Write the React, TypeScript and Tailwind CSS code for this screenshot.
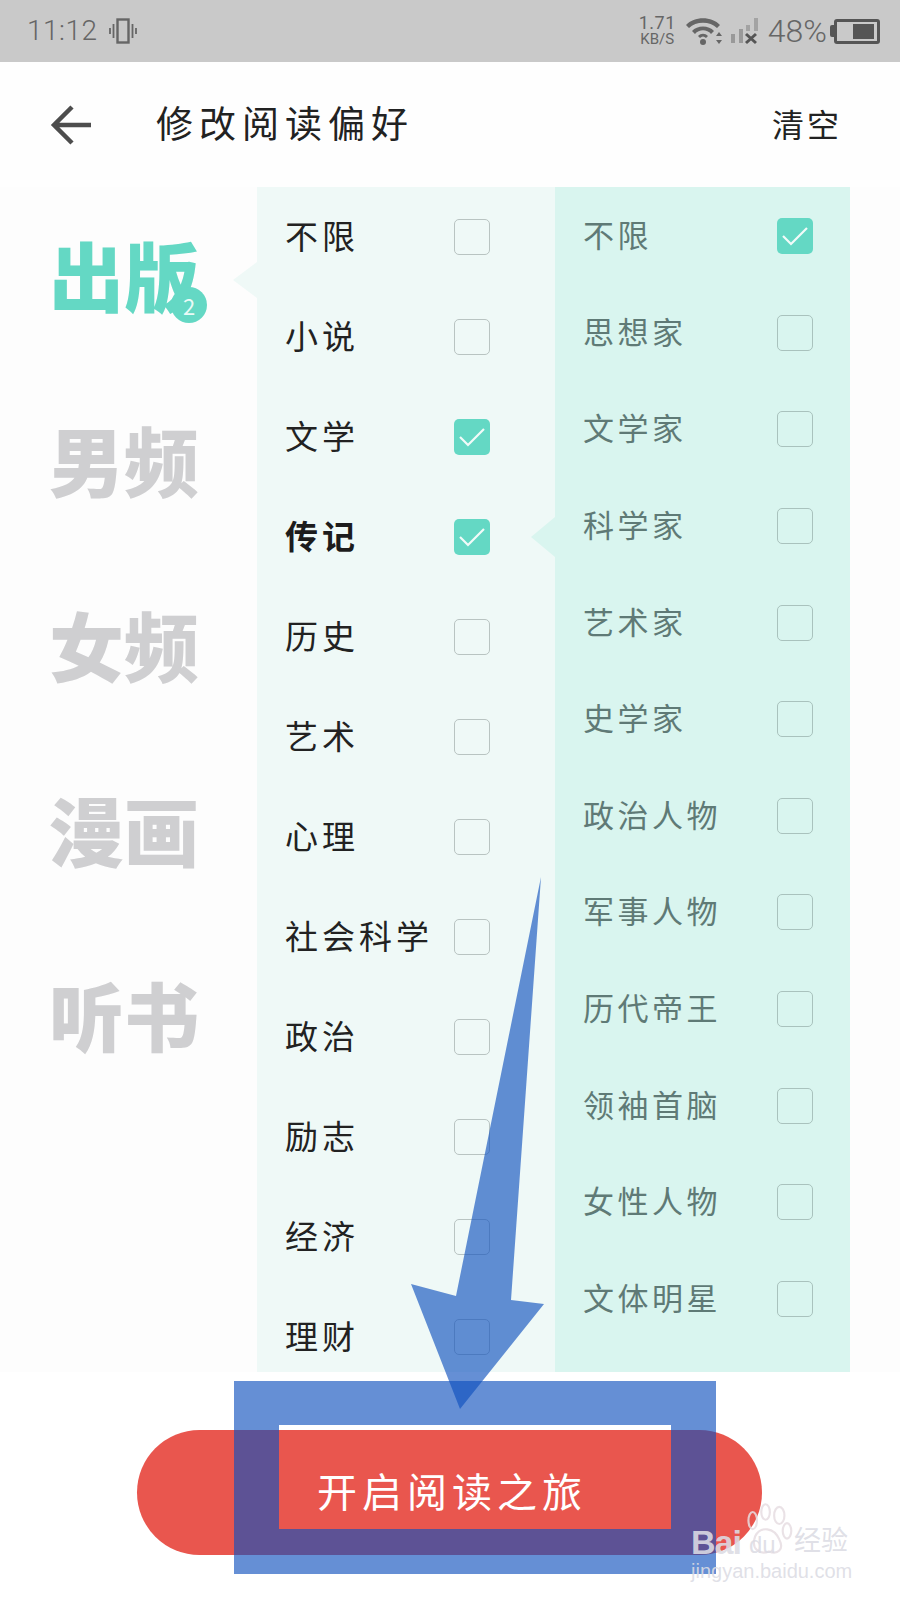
const cjk = "font-['Noto_Sans_CJK_SC','Noto_Sans_CJK_JP',sans-serif]";

type LeftItem = { name: string; checked?: boolean; bold?: boolean };

const categories = ["出版", "男频", "女频", "漫画", "听书"];

const leftItems: LeftItem[] = [
  { name: "不限" },
  { name: "小说" },
  { name: "文学", checked: true },
  { name: "传记", checked: true, bold: true },
  { name: "历史" },
  { name: "艺术" },
  { name: "心理" },
  { name: "社会科学" },
  { name: "政治" },
  { name: "励志" },
  { name: "经济" },
  { name: "理财" },
];

const rightItems = [
  "不限",
  "思想家",
  "文学家",
  "科学家",
  "艺术家",
  "史学家",
  "政治人物",
  "军事人物",
  "历代帝王",
  "领袖首脑",
  "女性人物",
  "文体明星",
];

const Checkbox = ({ checked, tone }: { checked?: boolean; tone: "light" | "dark" }) => {
  if (checked) {
    return (
      <div className="w-[36px] h-[36px] rounded-[5px] bg-[#64d8c4] flex items-center justify-center shrink-0">
        <svg width="28" height="22" viewBox="0 0 28 22" fill="none">
          <path d="M2 11 L10 19 L26 3" stroke="#f2fbf9" strokeWidth="2.2" />
        </svg>
      </div>
    );
  }
  return (
    <div
      className={
        tone === "light"
          ? "w-[36px] h-[36px] rounded-[5px] border border-[#b9c4c2] shrink-0"
          : "w-[36px] h-[36px] rounded-[5px] border border-[#a9c2bd] shrink-0"
      }
    />
  );
};

const StatusBar = () => (
  <div className="h-[62px] bg-[#c9c9c9] flex items-center justify-between pl-[27px] pr-[20px] text-[#666666] shrink-0">
    <div className="flex items-center gap-[11px]">
      <span className="font-['Roboto',sans-serif] font-light text-[28px] leading-none tracking-[0.5px]">11:12</span>
      <svg width="28" height="26" viewBox="0 0 28 26" fill="none" stroke="#666666">
        <rect x="8.5" y="1.5" width="11" height="23" strokeWidth="2.4" />
        <path d="M4.5 6v14M1 10v6M23.5 6v14M27 10v6" strokeWidth="1.8" />
      </svg>
    </div>
    <div className="flex items-center">
      <div className="flex flex-col items-center font-['Roboto',sans-serif] text-[#666666] mr-[10px] mt-[-2px]">
        <span className="text-[18px] leading-[18px] tracking-[0.5px]">1.71</span>
        <span className="text-[15px] leading-[15px]">KB/S</span>
      </div>
      <svg width="36" height="28" viewBox="0 0 36 28" fill="#666666" className="mr-[9px]">
        <path d="M0 8 C8 -1 26 -1 34 8 L31 11 C24 4 10 4 3 11 Z" />
        <path d="M6 14 C11 8 23 8 28 14 L25 17 C21 12 13 12 9 17 Z" />
        <path d="M12 19 C15 16 19 16 22 19 L20 21 C18 19 16 19 14 21 Z" />
        <circle cx="17" cy="25" r="3" />
        <path d="M33 15 L36 19 H30 Z M33 27 L36 23 H30 Z" />
      </svg>
      <svg width="28" height="28" viewBox="0 0 28 28" className="mr-[9px]">
        <rect x="0" y="17" width="4" height="9" fill="#999999" />
        <rect x="8" y="12" width="4" height="14" fill="#999999" />
        <rect x="15" y="8" width="4" height="6" fill="#a3a3a3" />
        <rect x="23" y="1" width="4" height="13" fill="#a3a3a3" />
        <path d="M15 17 L25 26 M25 17 L15 26" stroke="#555555" strokeWidth="3" />
      </svg>
      <span className="font-['Roboto',sans-serif] font-light text-[32px] leading-none mr-[3px]">48%</span>
      <div className="w-[4px] h-[12px] bg-[#555555] rounded-l-[2px]" />
      <div className="w-[46px] h-[25px] border-[3px] border-[#555555] rounded-[3px] flex justify-end p-[2px] pr-[3px]">
        <div className="w-[21px] h-full bg-[#555555]" />
      </div>
    </div>
  </div>
);

const Header = () => (
  <div className={`h-[125px] bg-[#fefefe] flex items-center justify-between pl-[50px] pr-[58px] shrink-0 ${cjk}`}>
    <div className="flex items-center">
      <svg width="42" height="40" viewBox="0 0 42 40" fill="none" stroke="#4d4d4d" strokeWidth="4.5">
        <path d="M41 20 H4 M22 2 L4 20 L22 38" />
      </svg>
      <span className="ml-[64px] mb-[4px] text-[37px] leading-none tracking-[6px] text-[#222222]">修改阅读偏好</span>
    </div>
    <span className="mb-[4px] text-[32px] leading-none tracking-[3px] text-[#222222]">清空</span>
  </div>
);

const Sidebar = () => (
  <div className="w-[257px] shrink-0 relative flex flex-col pl-[49px]">
    {categories.map((name, i) => (
      <div key={name} className="h-[185px] flex items-center pb-[12px]">
        <span
          className={
            i === 0
              ? "text-[75px] leading-none font-black text-[#64d8c4]"
              : "text-[75px] leading-none font-black text-[#cfcfd1]"
          }
        >
          {name}
        </span>
      </div>
    ))}
    <div className="absolute left-[171px] top-[100px] w-[36px] h-[36px] rounded-full bg-[#64d8c4] flex items-center justify-center text-[#eafaf6] text-[22px] leading-none">
      2
    </div>
    <div className="absolute right-0 top-[75px] border-y-[18px] border-y-transparent border-r-[24px] border-r-[#eff9f7]" />
  </div>
);

const Baidu = () => (
  <div className="absolute left-[691px] top-[1503px] w-[170px] h-[84px] text-[#dcdce4]/90">
    <svg width="48" height="54" viewBox="0 0 56 62" fill="none" stroke="#e6dde2" strokeOpacity="0.85" strokeWidth="2.5" className="absolute left-[54px] top-[0px]">
      <ellipse cx="9" cy="20" rx="5" ry="10" />
      <ellipse cx="24" cy="10" rx="5" ry="9" />
      <ellipse cx="40" cy="14" rx="6" ry="10" />
      <ellipse cx="49" cy="32" rx="5" ry="9" />
      <path d="M12 38 C18 26 34 28 40 42 C46 54 38 60 28 56 C18 60 6 54 12 38 Z" />
    </svg>
    <span className="absolute left-[0px] top-[22px] font-['Liberation_Sans',sans-serif] font-bold text-[34px] leading-none tracking-[-1px]">Bai</span>
    <span className="absolute left-[58px] top-[30px] font-['Liberation_Sans',sans-serif] text-[24px] leading-none">du</span>
    <span className="absolute left-[103px] top-[22px] text-[27px] leading-none">经验</span>
    <span className="absolute left-[0px] top-[58px] font-['Liberation_Sans',sans-serif] text-[20px] leading-none">jingyan.baidu.com</span>
  </div>
);

export default function App() {
  return (
    <div className={`relative w-[900px] h-[1600px] overflow-hidden bg-white flex flex-col ${cjk}`}>
      <StatusBar />
      <Header />
      <div className="h-[1185px] flex bg-[#fdfdfd] shrink-0">
        <Sidebar />
        <div className="w-[298px] shrink-0 bg-[#eff9f7] overflow-hidden">
          {leftItems.map((item) => (
            <div key={item.name} className="h-[100px] flex items-center justify-between pl-[28px] pr-[65px]">
              <span
                className={
                  item.bold
                    ? "mb-[4px] text-[33px] leading-none tracking-[4px] font-bold text-[#1c1c1c] whitespace-nowrap"
                    : "mb-[4px] text-[33px] leading-none tracking-[4px] text-[#222222] whitespace-nowrap"
                }
              >
                {item.name}
              </span>
              <Checkbox checked={item.checked} tone="light" />
            </div>
          ))}
        </div>
        <div className="w-[295px] shrink-0 relative bg-[#d9f5ef]">
          <div className="absolute left-[-24px] top-[330px] border-y-[20px] border-y-transparent border-r-[24px] border-r-[#d9f5ef]" />
          <div className="pt-[1px]">
            {rightItems.map((name, i) => (
              <div key={name} className="h-[96.6px] flex items-center justify-between pl-[28px] pr-[37px]">
                <span className="mb-[5px] text-[31px] leading-none tracking-[3.5px] text-[#5f7a76] whitespace-nowrap">{name}</span>
                <Checkbox checked={i === 0} tone="dark" />
              </div>
            ))}
          </div>
        </div>
      </div>
      <div className="flex-1 bg-white pt-[58px] pl-[137px]">
        <div className="w-[625px] h-[125px] rounded-full bg-[#e9564e] flex items-center pl-[180px] pb-[6px]">
          <span className="text-[40px] leading-none tracking-[5px] text-white whitespace-nowrap">开启阅读之旅</span>
        </div>
      </div>

      {/* annotation drawn on top of the screenshot */}
      <svg width="900" height="1600" viewBox="0 0 900 1600" className="absolute inset-0 pointer-events-none">
        <path d="M541 877 L511 1300 L544 1304 L460 1409 L411 1284 L456 1296 Z" fill="#0e50be" fillOpacity="0.64" />
      </svg>
      <div className="absolute left-[234px] top-[1381px] w-[482px] h-[193px] border-x-[45px] border-t-[44px] border-b-[45px] border-[#0e50be]/64" />
      <Baidu />
    </div>
  );
}
